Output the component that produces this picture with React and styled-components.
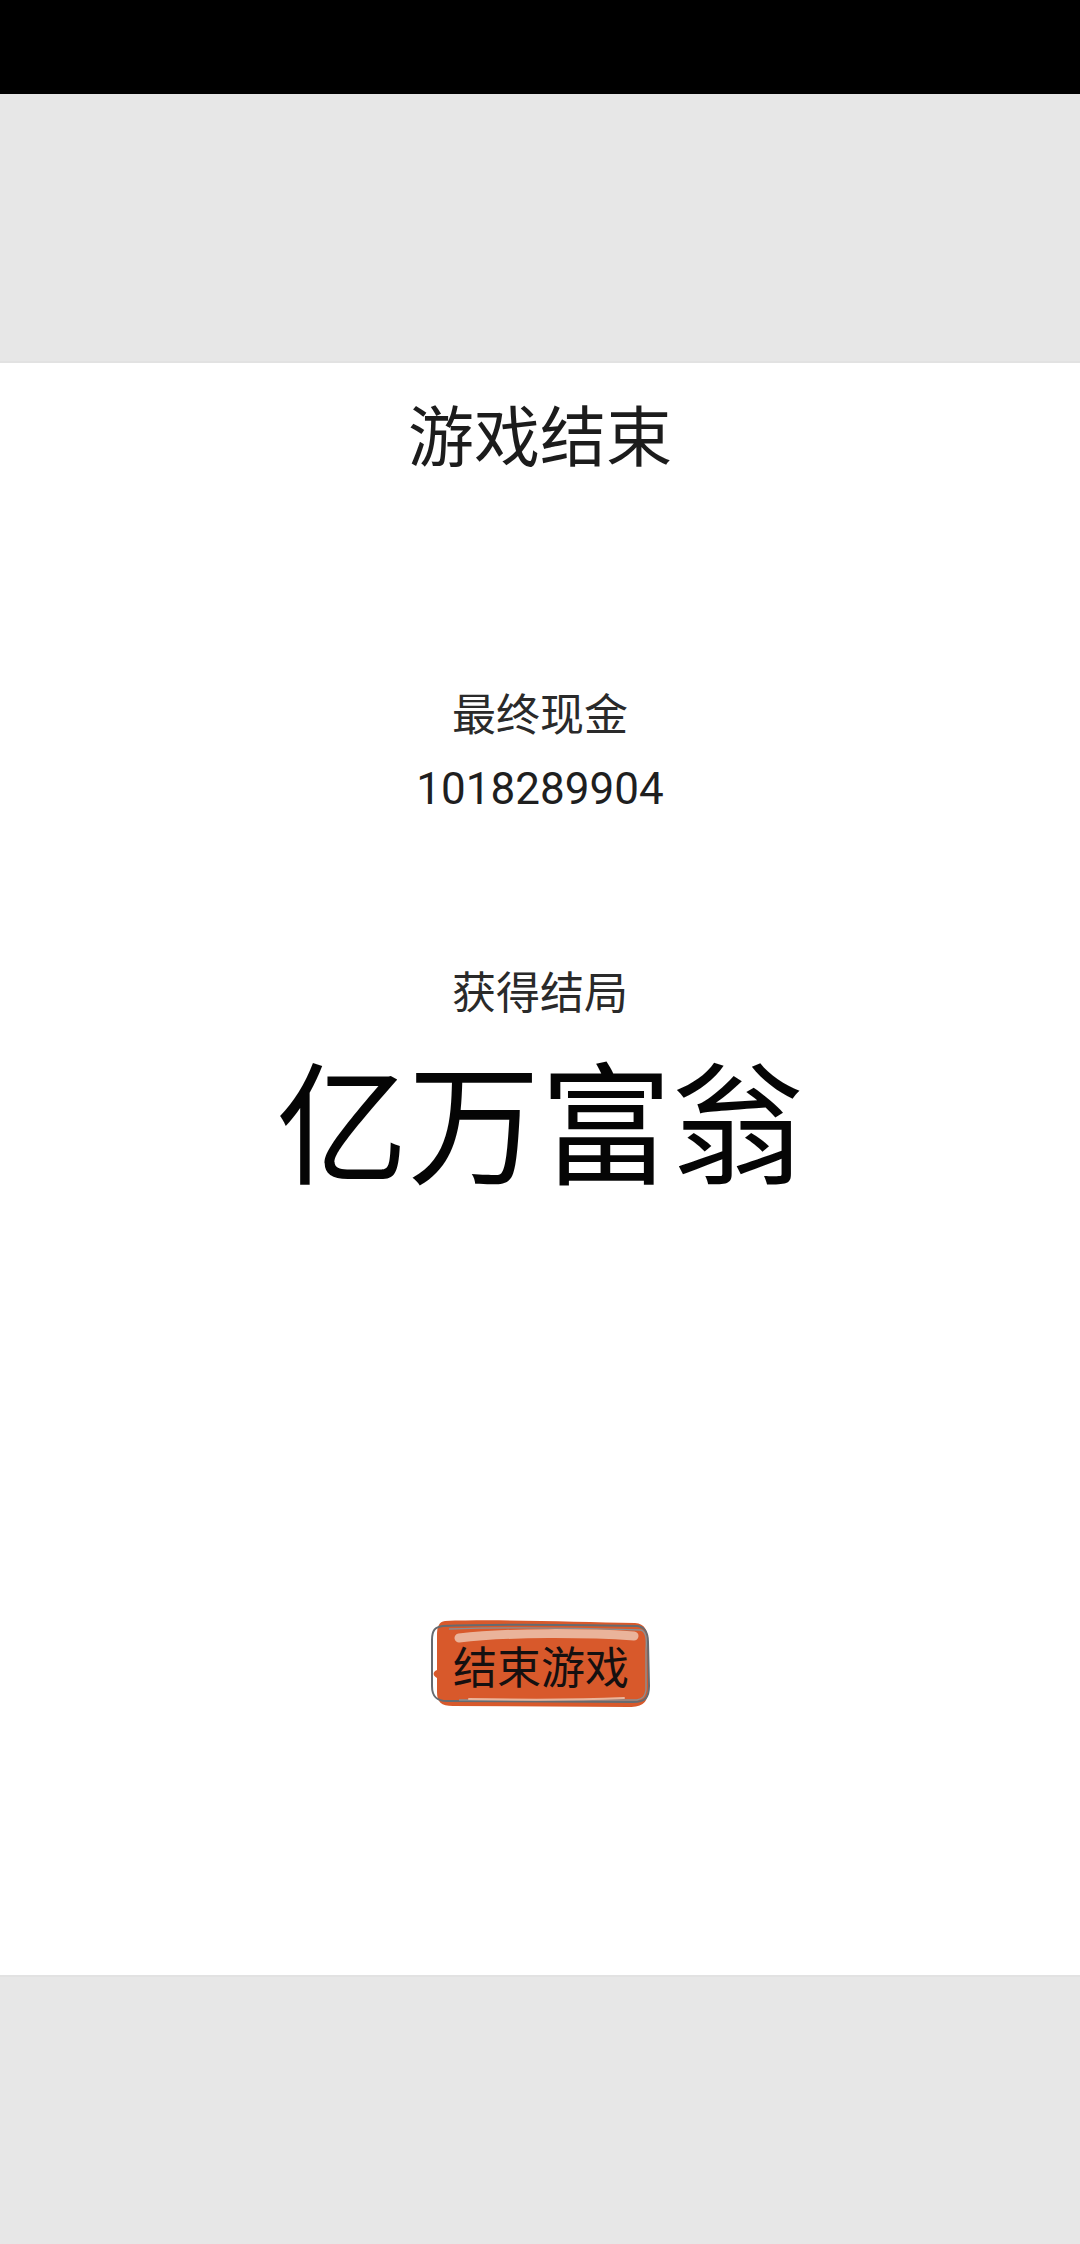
import React from "react";
import styled, { createGlobalStyle } from "styled-components";

const GlobalStyle = createGlobalStyle`
  html, body {
    margin: 0;
    padding: 0;
    background: #ffffff;
  }
  * { box-sizing: border-box; }
`;

const Screen = styled.div`
  width: 1080px;
  height: 2244px;
  display: flex;
  flex-direction: column;
  overflow: hidden;
`;

const StatusBar = styled.div`
  height: 94px;
  background: #000000;
  flex: none;
`;

const GrayBand = styled.div`
  height: ${(p) => p.$h}px;
  flex: none;
  background: #e7e7e7;
  border-${(p) => p.$edge}: 2px solid #e2e2e2;
`;

const Content = styled.main`
  flex: 1;
  background: #ffffff;
  display: flex;
  flex-direction: column;
  align-items: center;
  padding-top: 27px;
`;

const CJK = `"Noto Sans CJK SC", "Noto Sans", sans-serif`;

const Title = styled.h1`
  margin: 0;
  font-family: ${CJK};
  font-weight: 400;
  font-size: 66px;
  line-height: 1.3;
  color: #1c1c1c;
`;

const Label = styled.div`
  margin-top: ${(p) => p.$mt}px;
  font-family: ${CJK};
  font-size: 44px;
  line-height: 1.3;
  color: #2a2a2a;
`;

const Amount = styled.div`
  margin-top: 20px;
  font-family: Roboto, "Noto Sans CJK SC", sans-serif;
  font-size: 44px;
  line-height: 1.3;
  color: #1f1f1f;
`;

const Ending = styled.div`
  margin-top: 12px;
  font-family: ${CJK};
  font-size: 132px;
  line-height: 1.3;
  color: #050505;
`;

const ActionButton = styled.button`
  position: relative;
  margin-top: 417px;
  width: 222px;
  height: 88px;
  padding: 0;
  border: none;
  background: transparent;
  display: flex;
  align-items: center;
  justify-content: center;
  cursor: pointer;
`;

const Sketch = styled.svg`
  position: absolute;
  inset: 0;
  width: 100%;
  height: 100%;
`;

const ButtonText = styled.span`
  position: relative;
  font-family: ${CJK};
  font-size: 44px;
  line-height: 1;
  color: #151010;
  margin-top: 2px;
  margin-left: 2px;
`;

function SketchBackground() {
  return (
    <Sketch viewBox="0 0 222 88" aria-hidden="true">
      <path
        d="M16 1 C70 -1 150 2 206 3 C216 4 219 10 219 22 L219 70 C219 82 214 87 200 87 L24 86 C12 86 8 82 8 72 L8 58 C4 56 3 52 8 50 L8 16 C8 6 10 2 16 1 Z"
        fill="#d8592b"
      />
      <path
        d="M14 6 C60 4 160 5 208 6 C216 7 219 12 219 22 L220 66 C220 78 216 82 204 82 L18 81 C8 81 3 77 3 66 L3 20 C3 10 6 7 14 6 Z"
        fill="none"
        stroke="#666b70"
        strokeWidth="2"
      />
      <path
        d="M20 9 C80 7 150 8 212 10 C217 12 218 18 217 30 L217 70 C216 76 214 79 208 80 L30 80"
        fill="none"
        stroke="#8a8f93"
        strokeWidth="1.4"
      />
      <path
        d="M30 18 C80 12 160 13 205 16"
        fill="none"
        stroke="#ecbca6"
        strokeWidth="9"
        strokeLinecap="round"
        opacity="0.9"
      />
      <path
        d="M40 79 C90 80 150 80 195 78"
        fill="none"
        stroke="#eab59c"
        strokeWidth="2"
        strokeLinecap="round"
      />
    </Sketch>
  );
}

export default function App() {
  return (
    <>
      <GlobalStyle />
      <Screen>
        <StatusBar />
        <GrayBand $h={269} $edge="bottom" />
        <Content>
          <Title>游戏结束</Title>
          <Label $mt={208}>最终现金</Label>
          <Amount>1018289904</Amount>
          <Label $mt={144}>获得结局</Label>
          <Ending>亿万富翁</Ending>
          <ActionButton type="button">
            <SketchBackground />
            <ButtonText>结束游戏</ButtonText>
          </ActionButton>
        </Content>
        <GrayBand $h={269} $edge="top" />
      </Screen>
    </>
  );
}
